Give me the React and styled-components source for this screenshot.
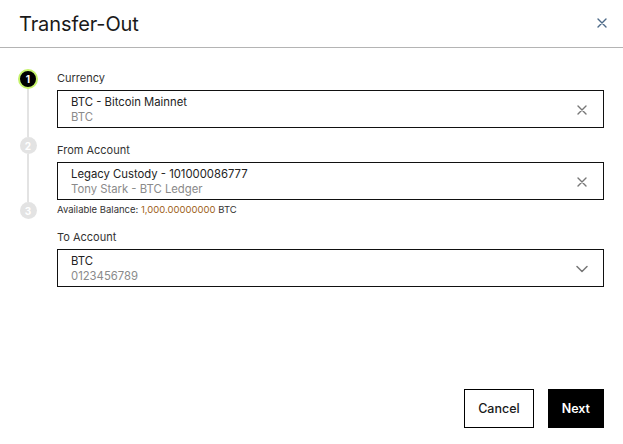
import React from "react";
import styled, { createGlobalStyle } from "styled-components";

const GlobalStyle = createGlobalStyle`
  body {
    margin: 0;
    background: #fff;
    font-family: Inter, "Noto Sans", sans-serif;
    color: #222;
  }
`;

const Dialog = styled.div`
  width: 623px;
  height: 444px;
  display: flex;
  flex-direction: column;
  background: #fff;
`;

const Header = styled.div`
  height: 48px;
  display: flex;
  align-items: center;
  justify-content: space-between;
  padding: 0 14px 0 19px;
  border-bottom: 1px solid #b4b4b4;
  box-sizing: border-box;
  h1 {
    margin: 0;
    font-size: 20px;
    font-weight: 400;
    color: #1a1a1a;
    letter-spacing: -0.1px;
  }
`;

const CloseBtn = styled.button`
  border: 0;
  background: none;
  padding: 0;
  width: 12px;
  height: 12px;
  display: flex;
  cursor: pointer;
`;

const Body = styled.div`
  flex: 1;
  display: flex;
  padding: 23px 19px 0 18px;
`;

const Stepper = styled.div`
  width: 20px;
  margin: -2px 19px 0 0;
  display: flex;
  flex-direction: column;
  align-items: center;
`;

const Step = styled.div`
  width: ${(p) => (p.$active ? "20px" : "17px")};
  height: ${(p) => (p.$active ? "20px" : "17px")};
  border-radius: 50%;
  box-sizing: border-box;
  background: ${(p) => (p.$active ? "#000" : "#e3e3e3")};
  border: ${(p) => (p.$active ? "2px solid #c5f26a" : "none")};
  color: #fff;
  font-size: 10px;
  font-weight: 700;
  display: flex;
  align-items: center;
  justify-content: center;
  flex-shrink: 0;
`;

const Line = styled.div`
  width: 2px;
  height: ${(p) => p.$h}px;
  background: #e3e3e3;
`;

const Fields = styled.div`
  flex: 1;
  display: flex;
  flex-direction: column;
`;

const Field = styled.div`
  display: flex;
  flex-direction: column;
  margin-bottom: 15px;
`;

const Label = styled.div`
  font-size: 11px;
  line-height: 14px;
  color: #333;
  margin-bottom: 5px;
`;

const Select = styled.div`
  height: 38px;
  box-sizing: border-box;
  border: 1px solid #111;
  display: flex;
  align-items: center;
  padding: 1px 14px 0 13px;
`;

const Values = styled.div`
  flex: 1;
  display: flex;
  flex-direction: column;
`;

const Primary = styled.span`
  font-size: 11.3px;
  line-height: 15px;
  color: #222;
`;

const Secondary = styled.span`
  font-size: 11.3px;
  line-height: 15px;
  color: #8a8a8a;
`;

const IconBtn = styled.span`
  width: 14px;
  height: 14px;
  display: flex;
  align-items: center;
  justify-content: center;
`;

const Balance = styled.div`
  font-size: 9.5px;
  line-height: 10px;
  color: #333;
  margin-top: 5px;
  span {
    color: #a0621a;
  }
`;

const Footer = styled.div`
  display: flex;
  justify-content: flex-end;
  gap: 14px;
  padding: 0 19px 16px 0;
`;

const Button = styled.button`
  height: 39px;
  padding: 0 13px;
  font-family: Inter, "Noto Sans", sans-serif;
  font-size: 12.5px;
  font-weight: ${(p) => (p.$primary ? 600 : 500)};
  background: ${(p) => (p.$primary ? "#000" : "#fff")};
  color: ${(p) => (p.$primary ? "#fff" : "#1a1a1a")};
  border: 1px solid #000;
  cursor: pointer;
`;

const XIcon = ({ color = "#777", size = 10 }) => (
  <svg width={size} height={size} viewBox="0 0 10 10">
    <path d="M1 1 L9 9 M9 1 L1 9" stroke={color} strokeWidth="1.4" strokeLinecap="round" />
  </svg>
);

const Chevron = () => (
  <svg width="12" height="8" viewBox="0 0 12 8">
    <path d="M1 1.5 L6 6.5 L11 1.5" fill="none" stroke="#777" strokeWidth="1.5" strokeLinecap="round" strokeLinejoin="round" />
  </svg>
);

const fields = [
  { label: "Currency", main: "BTC - Bitcoin Mainnet", sub: "BTC", icon: "clear" },
  { label: "From Account", main: "Legacy Custody - 101000086777", sub: "Tony Stark - BTC Ledger", icon: "clear", balance: true },
  { label: "To Account", main: "BTC", sub: "0123456789", icon: "chevron" },
];

export default function App() {
  return (
    <>
      <GlobalStyle />
      <Dialog>
        <Header>
          <h1>Transfer-Out</h1>
          <CloseBtn aria-label="close">
            <XIcon color="#4d6a88" size={10} />
          </CloseBtn>
        </Header>
        <Body>
          <Stepper>
            <Step $active>1</Step>
            <Line $h={48} />
            <Step>2</Step>
            <Line $h={48} />
            <Step>3</Step>
          </Stepper>
          <Fields>
            {fields.map((f) => (
              <Field key={f.label}>
                <Label>{f.label}</Label>
                <Select>
                  <Values>
                    <Primary>{f.main}</Primary>
                    <Secondary>{f.sub}</Secondary>
                  </Values>
                  <IconBtn>{f.icon === "clear" ? <XIcon /> : <Chevron />}</IconBtn>
                </Select>
                {f.balance && (
                  <Balance>
                    Available Balance: <span>1,000.00000000</span> BTC
                  </Balance>
                )}
              </Field>
            ))}
          </Fields>
        </Body>
        <Footer>
          <Button>Cancel</Button>
          <Button $primary>Next</Button>
        </Footer>
      </Dialog>
    </>
  );
}
